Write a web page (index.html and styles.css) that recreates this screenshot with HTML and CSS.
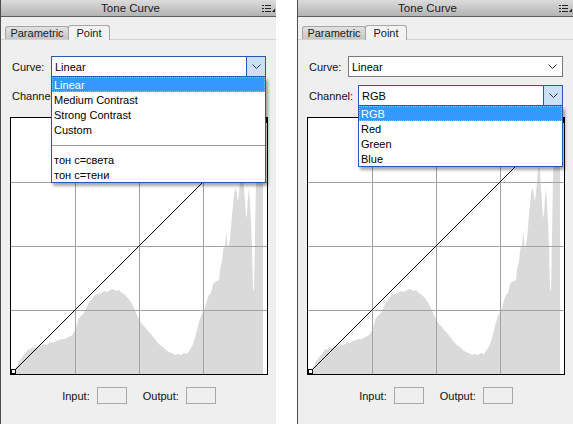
FILE: index.html
```html
<!DOCTYPE html>
<html>
<head>
<meta charset="utf-8">
<title>Tone Curve</title>
<link rel="stylesheet" href="styles.css">
</head>
<body>
<div class="screen">
  <section class="panel">
    <header class="titlebar">
      <span class="title">Tone Curve</span>
      <span class="menu"><svg width="13" height="7" viewBox="0 0 13 7"><rect x="0" y="0" width="2" height="1" fill="#222"/><rect x="3" y="0" width="6" height="1" fill="#222"/><rect x="0" y="3" width="2" height="1" fill="#222"/><rect x="3" y="3" width="6" height="1" fill="#222"/><rect x="0" y="6" width="2" height="1" fill="#222"/><rect x="3" y="6" width="6" height="1" fill="#222"/><polygon points="10,7 13,3.5 13,7" fill="#222"/></svg></span>
    </header>
    <div class="tabs">
      <span class="tab param">Parametric</span>
      <span class="tab point active">Point</span>
    </div>
    <div class="body">
      <div class="row">
        <span class="lbl">Curve:</span>
        <div class="select curve focus">
          <span class="val">Linear</span>
          <span class="btn"><svg width="9" height="5" viewBox="0 0 9 5"><polyline points="0.5,0.5 4.5,4.5 8.5,0.5" fill="none" stroke="#333" stroke-width="1"/></svg></span>
          <ul class="list">
            <li class="sel">Linear</li>
            <li>Medium Contrast</li>
            <li>Strong Contrast</li>
            <li>Custom</li>
            <li class="sep"></li>
            <li>тон с=света</li>
            <li>тон с=тени</li>
          </ul>
        </div>
      </div>
      <div class="row">
        <span class="lbl">Channel:</span>
        <div class="select channel">
          <span class="val">RGB</span>
          <span class="btn"><svg width="9" height="5" viewBox="0 0 9 5"><polyline points="0.5,0.5 4.5,4.5 8.5,0.5" fill="none" stroke="#333" stroke-width="1"/></svg></span>
        </div>
      </div>
      <div class="graph">
        <svg width="256" height="256" viewBox="0 0 256 256">
          <polygon class="hist" points="0,256 1,254 3,252 5,249 7,247 8,243 10,241 12,238 14,236 16,233 17,231 19,232 21,229 24,230 27,228 30,228 33,226 36,227 39,224 42,225 45,223 48,222 51,221 54,221 57,219 60,218 62,216 63,213 64,214 65,210 66,206 67,203 68,200 70,198 72,196 74,193 76,188 78,184 80,182 82,179 84,177 87,176 90,175 93,173 96,174 99,172 102,171 105,173 108,172 111,175 114,177 117,180 119,183 121,186 123,190 125,195 127,199 129,203 131,206 134,209 137,213 140,216 143,220 146,224 149,227 152,229 155,232 158,234 161,235 164,237 167,236 170,237 173,235 176,236 178,233 180,230 182,226 184,220 186,212 188,204 190,198 192,194 194,190 196,182 198,177 200,175 202,166 204,164 206,163 208,162 209,152 210,147 211,143 212,133 213,128 214,130 215,114 216,122 217,131 218,126 219,120 220,110 221,96 222,88 223,76 224,72 225,70 226,78 227,84 228,74 229,64 230,52 231,46 232,54 233,70 234,84 235,100 236,96 237,80 238,70 239,86 240,104 241,130 242,170 243,174 244,120 245,60 246,20 247,4 249,2 251,4 252,30 252,256"/>
          <g class="grid">
            <line x1="64.5" y1="0" x2="64.5" y2="256"/>
            <line x1="128.5" y1="0" x2="128.5" y2="256"/>
            <line x1="192.5" y1="0" x2="192.5" y2="256"/>
            <line x1="0" y1="64.5" x2="256" y2="64.5"/>
            <line x1="0" y1="128.5" x2="256" y2="128.5"/>
            <line x1="0" y1="192.5" x2="256" y2="192.5"/>
          </g>
          <line class="curve-line" x1="0" y1="256" x2="256" y2="0"/>
          <rect class="pt" x="0.5" y="251.5" width="4" height="4"/>
          <rect class="pt" x="251.5" y="0.5" width="4" height="4"/>
        </svg>
      </div>
      <div class="io">
        <span class="lbl">Input:</span><span class="box"></span>
        <span class="lbl">Output:</span><span class="box"></span>
      </div>
    </div>
  </section>

  <section class="panel">
    <header class="titlebar">
      <span class="title">Tone Curve</span>
      <span class="menu"><svg width="13" height="7" viewBox="0 0 13 7"><rect x="0" y="0" width="2" height="1" fill="#222"/><rect x="3" y="0" width="6" height="1" fill="#222"/><rect x="0" y="3" width="2" height="1" fill="#222"/><rect x="3" y="3" width="6" height="1" fill="#222"/><rect x="0" y="6" width="2" height="1" fill="#222"/><rect x="3" y="6" width="6" height="1" fill="#222"/><polygon points="10,7 13,3.5 13,7" fill="#222"/></svg></span>
    </header>
    <div class="tabs">
      <span class="tab param">Parametric</span>
      <span class="tab point active">Point</span>
    </div>
    <div class="body">
      <div class="row">
        <span class="lbl">Curve:</span>
        <div class="select curve">
          <span class="val">Linear</span>
          <span class="btn"><svg width="9" height="5" viewBox="0 0 9 5"><polyline points="0.5,0.5 4.5,4.5 8.5,0.5" fill="none" stroke="#333" stroke-width="1"/></svg></span>
        </div>
      </div>
      <div class="row">
        <span class="lbl">Channel:</span>
        <div class="select channel focus">
          <span class="val">RGB</span>
          <span class="btn"><svg width="9" height="5" viewBox="0 0 9 5"><polyline points="0.5,0.5 4.5,4.5 8.5,0.5" fill="none" stroke="#333" stroke-width="1"/></svg></span>
          <ul class="list">
            <li class="sel">RGB</li>
            <li>Red</li>
            <li>Green</li>
            <li>Blue</li>
          </ul>
        </div>
      </div>
      <div class="graph">
        <svg width="256" height="256" viewBox="0 0 256 256">
          <polygon class="hist" points="0,256 1,254 3,252 5,249 7,247 8,243 10,241 12,238 14,236 16,233 17,231 19,232 21,229 24,230 27,228 30,228 33,226 36,227 39,224 42,225 45,223 48,222 51,221 54,221 57,219 60,218 62,216 63,213 64,214 65,210 66,206 67,203 68,200 70,198 72,196 74,193 76,188 78,184 80,182 82,179 84,177 87,176 90,175 93,173 96,174 99,172 102,171 105,173 108,172 111,175 114,177 117,180 119,183 121,186 123,190 125,195 127,199 129,203 131,206 134,209 137,213 140,216 143,220 146,224 149,227 152,229 155,232 158,234 161,235 164,237 167,236 170,237 173,235 176,236 178,233 180,230 182,226 184,220 186,212 188,204 190,198 192,194 194,190 196,182 198,177 200,175 202,166 204,164 206,163 208,162 209,152 210,147 211,143 212,133 213,128 214,130 215,114 216,122 217,131 218,126 219,120 220,110 221,96 222,88 223,76 224,72 225,70 226,78 227,84 228,74 229,64 230,52 231,46 232,54 233,70 234,84 235,100 236,96 237,80 238,70 239,86 240,104 241,130 242,170 243,174 244,120 245,60 246,20 247,4 249,2 251,4 252,30 252,256"/>
          <g class="grid">
            <line x1="64.5" y1="0" x2="64.5" y2="256"/>
            <line x1="128.5" y1="0" x2="128.5" y2="256"/>
            <line x1="192.5" y1="0" x2="192.5" y2="256"/>
            <line x1="0" y1="64.5" x2="256" y2="64.5"/>
            <line x1="0" y1="128.5" x2="256" y2="128.5"/>
            <line x1="0" y1="192.5" x2="256" y2="192.5"/>
          </g>
          <line class="curve-line" x1="0" y1="256" x2="256" y2="0"/>
          <rect class="pt" x="0.5" y="251.5" width="4" height="4"/>
          <rect class="pt" x="251.5" y="0.5" width="4" height="4"/>
        </svg>
      </div>
      <div class="io">
        <span class="lbl">Input:</span><span class="box"></span>
        <span class="lbl">Output:</span><span class="box"></span>
      </div>
    </div>
  </section>
</div>
</body>
</html>
```

FILE: styles.css
```css
* { box-sizing: border-box; margin: 0; padding: 0; }
html, body { background: #ffffff; }
body {
  margin: 0;
  font-family: "Liberation Sans", Arial, sans-serif;
  font-size: 11px;
  color: #111111;
}
.screen {
  display: flex;
  gap: 21px;
  height: 424px;
  overflow: hidden;
}
.panel {
  width: 276px;
  flex: none;
  height: 424px;
  background: #efefef;
  border-left: 1px solid #4d4d4d;
  display: flex;
  flex-direction: column;
}
.titlebar {
  height: 17px;
  border-bottom: 1px solid #5e5e5e;
  background: linear-gradient(#dcdcdc, #b3b3b3);
  display: flex;
  align-items: center;
}
.title {
  flex: 1;
  text-align: center;
  line-height: 16px;
  font-size: 11.5px;
  color: #1a1a1a;
}
.menu {
  width: 16px;
  display: flex;
  justify-content: flex-end;
  padding-right: 1px;
  padding-top: 1px;
}
.menu svg { display: block; }

.tabs {
  height: 23px;
  padding: 8px 0 0 4px;
  display: flex;
  align-items: flex-end;
  border-bottom: 1px solid #d2d2d2;
}
.tab {
  border: 1px solid #a6a6a6;
  border-bottom: none;
  border-radius: 3px 3px 0 0;
  text-align: center;
  color: #1a1a1a;
}
.tab.param {
  width: 64px;
  height: 13px;
  line-height: 12px;
  background: linear-gradient(#e2e2e2, #c6c6c6);
}
.tab.point {
  width: 42px;
  height: 15px;
  line-height: 14px;
  margin-left: -1px;
  margin-bottom: -1px;
  background: #f3f3f3;
  position: relative;
}

.body {
  padding: 16px 8px 0 9px;
  display: flex;
  flex-direction: column;
}
.row {
  height: 21px;
  padding: 0 2px;
  display: flex;
  align-items: center;
  justify-content: space-between;
}
.row + .row { margin-top: 8px; }
.lbl { white-space: nowrap; }

.select {
  position: relative;
  height: 21px;
  border: 1px solid #7a7a7a;
  background: #ffffff;
  display: flex;
  align-items: center;
}
.select.curve { width: 215px; }
.select.channel { width: 205px; }
.select .val {
  flex: 1;
  padding-left: 3px;
  padding-top: 1px;
  color: #000;
}
.select .btn {
  width: 19px;
  align-self: stretch;
  display: flex;
  align-items: center;
  justify-content: center;
}
.select .btn svg { display: block; }
.select.focus { border-color: #2458b3; }
.select.focus .btn {
  background: #c9e0f7;
  border-left: 1px solid #2458b3;
}

.list {
  position: absolute;
  top: calc(100% + 1px);
  left: -1px;
  right: -1px;
  z-index: 5;
  list-style: none;
  background: #ffffff;
  border: 1px solid #2458b3;
  border-top: none;
  box-shadow: 2px 3px 3px rgba(0, 0, 0, 0.35);
}
.list li {
  height: 15px;
  line-height: 16px;
  padding-left: 2px;
  white-space: nowrap;
  color: #000;
}
.list li.sel {
  background: #3399ff;
  color: #ffffff;
  outline: 1px dotted #e6b05c;
  outline-offset: -1px;
}
.list li.sep {
  background: linear-gradient(#9a9a9a, #9a9a9a) 0 8px / 100% 1px no-repeat;
}

.graph {
  margin-top: 11px;
  width: 258px;
  height: 258px;
  border: 1px solid #000000;
  background: #ffffff;
}
.graph svg { display: block; }
.hist { fill: #dadada; }
.grid line {
  stroke: #a2a2a2;
  stroke-width: 1;
  shape-rendering: crispEdges;
}
.curve-line { stroke: #000000; stroke-width: 1; }
.pt { fill: #ffffff; stroke: #000000; stroke-width: 1; shape-rendering: crispEdges; }

.io {
  margin-top: 12px;
  height: 17px;
  display: flex;
  justify-content: center;
  align-items: center;
}
.io .lbl { margin-right: 7px; }
.io .box {
  width: 30px;
  height: 17px;
  border: 1px solid #a8a8a8;
  background: #efefef;
}
.io .box + .lbl { margin-left: 16px; }
```
